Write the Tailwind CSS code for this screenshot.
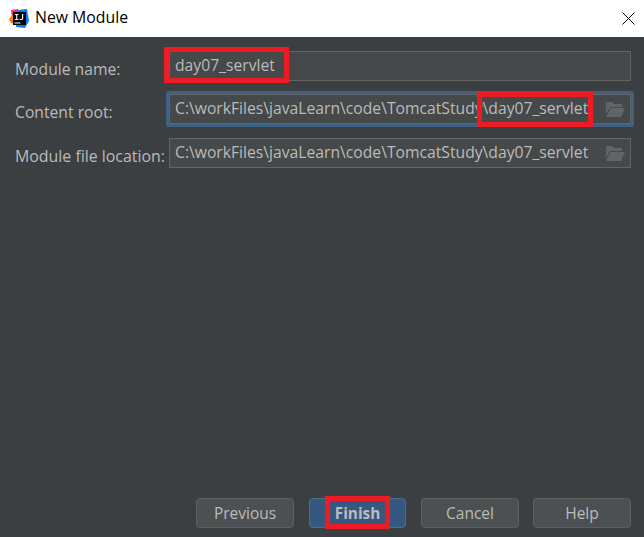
<!DOCTYPE html>
<html lang="en">
<head>
  <meta charset="UTF-8">
  <title>New Module</title>
  <script src="https://cdn.jsdelivr.net/npm/@tailwindcss/browser@4"></script>
</head>
<body class="relative h-[537px] w-[644px] overflow-hidden flex flex-col bg-[#3c3f41] font-['Open_Sans',sans-serif] text-[15.7px]">

  <!-- Title bar -->
  <header class="h-[37px] bg-white flex items-center pl-[9px] pr-[9px] text-black">
    <svg class="w-[20px] h-[20px] mr-[6px]" viewBox="0 0 20 20">
      <path d="M2 1 L9 0 L10 8 L3 10 Z" fill="#fe315d"/>
      <path d="M0 10 L4 6 L6 15 L2 14 Z" fill="#f97a12"/>
      <path d="M9 1 L18 0 L20 12 L16 19 L7 18 Z" fill="#087cfa"/>
      <rect x="4" y="3" width="13" height="13" fill="#000"/>
      <rect x="5.5" y="13.5" width="6" height="1" fill="#fff"/>
      <rect x="6" y="5" width="3.5" height="1" fill="#fff"/>
      <rect x="7.2" y="5" width="1.1" height="6" fill="#fff"/>
      <rect x="6" y="10" width="3.5" height="1" fill="#fff"/>
      <path d="M11 9.5 C11.5 10.5 13 10.5 13 9.3 L13 5 L14.2 5 L14.2 9.5 C14 11.5 11.3 11.5 10.4 10.2 Z" fill="#fff"/>
    </svg>
    <span class="text-[15.8px] pb-[1px]">New Module</span>
    <svg class="ml-auto w-[13px] h-[13px]" viewBox="0 0 13 13" fill="none" stroke="#000" stroke-width="1">
      <path d="M0.5 0.5 L12.5 12.5 M12.5 0.5 L0.5 12.5"/>
    </svg>
  </header>

  <!-- Form -->
  <main class="flex-1 flex flex-col pt-[14px] pb-[9px] pl-[15px] pr-[13px] text-[#bbbbbb]">
    <div class="flex items-center h-[30px]">
      <label class="w-[154px] pt-[7px] whitespace-nowrap">Module name:</label>
      <div class="flex-1 h-full border border-[#646464] bg-[#45494a] flex items-center pl-[5px] pb-[1px]">day07_servlet</div>
    </div>

    <div class="flex items-center h-[30px] mt-[13px]">
      <label class="w-[154px] pt-[7px] whitespace-nowrap">Content root:</label>
      <div class="flex-1 h-full border border-[#646464] bg-[#45494a] ring-3 ring-[#3d6185] rounded-[1px] flex items-center pl-[5px] pb-[1px]">
        <span class="whitespace-nowrap">C:\workFiles\javaLearn\code\TomcatStudy\day07_servlet</span>
        <svg class="ml-auto mr-[5px] mt-[1px] w-[20px] h-[15px] shrink-0" viewBox="0 0 20 15" fill="#5f6569">
          <path d="M1 0 H7 L9 2 H17 V5 H5 L1 12 Z"/>
          <path d="M5.5 6 H20 L16 15 H1 Z"/>
        </svg>
      </div>
    </div>

    <div class="flex items-center h-[30px] mt-[14px]">
      <label class="w-[154px] pt-[7px] whitespace-nowrap text-[15.9px]">Module file location:</label>
      <div class="flex-1 h-full border border-[#646464] bg-[#45494a] flex items-center pl-[5px] pb-[1px]">
        <span class="whitespace-nowrap">C:\workFiles\javaLearn\code\TomcatStudy\day07_servlet</span>
        <svg class="ml-auto mr-[5px] mt-[1px] w-[20px] h-[15px] shrink-0" viewBox="0 0 20 15" fill="#5f6569">
          <path d="M1 0 H7 L9 2 H17 V5 H5 L1 12 Z"/>
          <path d="M5.5 6 H20 L16 15 H1 Z"/>
        </svg>
      </div>
    </div>

    <!-- Buttons -->
    <div class="mt-auto flex justify-end">
      <button class="w-[98px] h-[30px] pt-[2px] rounded-[4px] border border-[#5e6060] bg-[#4c5052] text-[#bbbbbb] text-[15.5px]">Previous</button>
      <button class="ml-[15px] w-[97px] h-[30px] pt-[1px] rounded-[4px] border border-[#4c708c] bg-[#365880] text-[#bbbbbb] text-[15.3px] font-bold">Finish</button>
      <button class="ml-[15px] w-[98px] h-[30px] pt-[2px] rounded-[4px] border border-[#5e6060] bg-[#4c5052] text-[#bbbbbb] text-[15.5px]">Cancel</button>
      <button class="ml-[14px] w-[98px] h-[30px] pt-[2px] rounded-[4px] border border-[#5e6060] bg-[#4c5052] text-[#bbbbbb] text-[15.5px]">Help</button>
    </div>
  </main>

  <!-- Red annotation boxes drawn over the screenshot -->
  <div class="absolute left-[164px] top-[47px] w-[125px] h-[36px] border-[5px] border-[#ed1c24]"></div>
  <div class="absolute left-[477px] top-[92px] w-[116px] h-[35px] border-[5px] border-[#ed1c24]"></div>
  <div class="absolute left-[325px] top-[496px] w-[65px] h-[33px] border-[5px] border-[#ed1c24]"></div>
</body>
</html>
